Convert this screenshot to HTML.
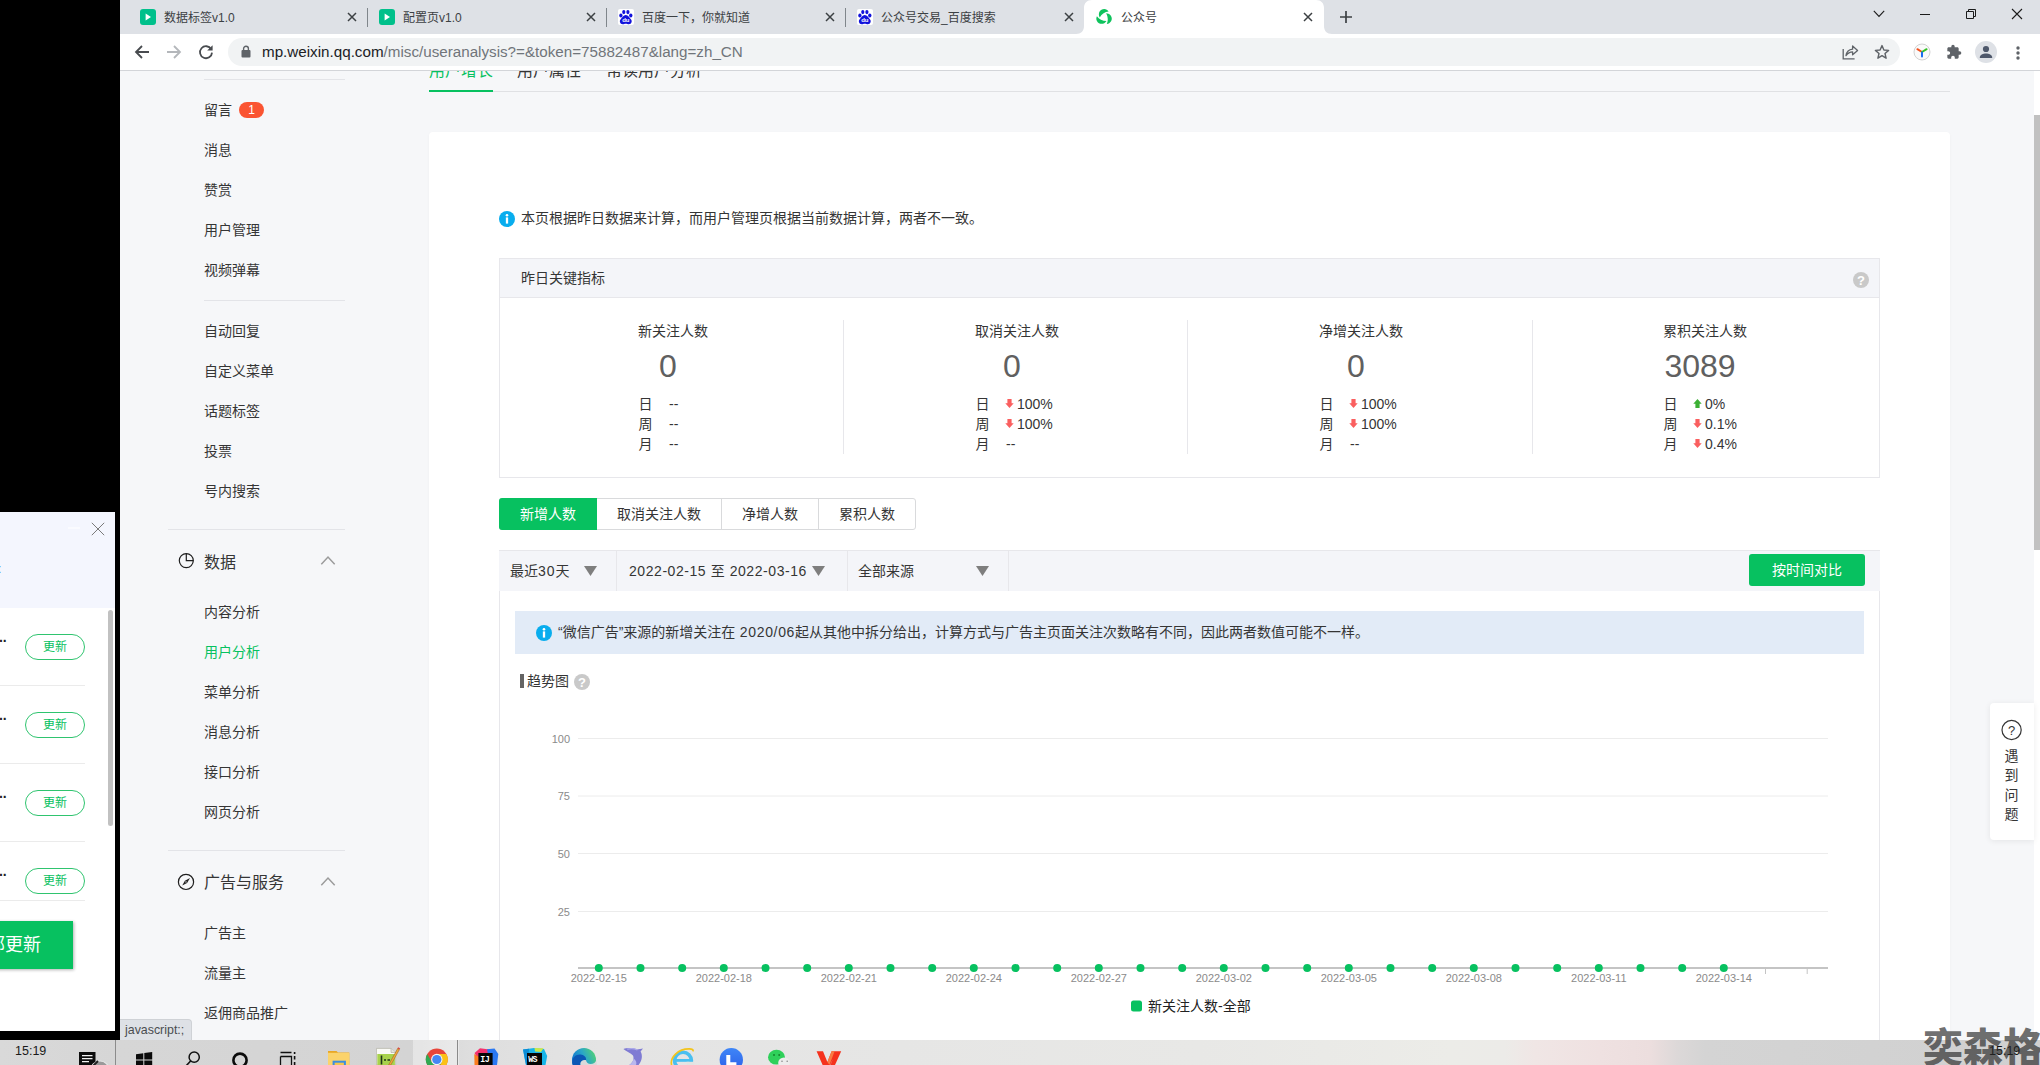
<!DOCTYPE html>
<html lang="zh-CN">
<head>
<meta charset="utf-8">
<title>公众号</title>
<style>
*{box-sizing:border-box;margin:0;padding:0}
html,body{width:2040px;height:1065px;overflow:hidden;background:#000}
body{position:relative;font-family:"Liberation Sans","Noto Sans CJK SC",sans-serif;font-size:14px;color:#353535;-webkit-font-smoothing:antialiased}
.abs{position:absolute}
.t{position:absolute;white-space:nowrap;line-height:20px}
/* ===== browser chrome ===== */
#tabbar{position:absolute;left:120px;top:0;width:1920px;height:34px;background:#dee1e6}
#toolbar{position:absolute;left:120px;top:34px;width:1920px;height:37px;background:#fff;border-bottom:1px solid #d3d5d9}
#pill{position:absolute;left:108px;top:4px;width:1672px;height:28px;border-radius:14px;background:#f1f3f4}
.tabt{position:absolute;top:9px;font-size:12px;line-height:18px;color:#3c4043;white-space:nowrap}
.tabsep{position:absolute;top:8px;width:1px;height:19px;background:#80868b}
/* ===== page ===== */
#page{position:absolute;left:120px;top:71px;width:1914px;height:969px;background:#f6f7f9;overflow:hidden}
#sb{position:absolute;left:2034px;top:71px;width:6px;height:969px;background:#fff}
#sbthumb{position:absolute;left:0;top:44px;width:6px;height:435px;background:#c1c1c1}
.nav{position:absolute;left:204px;font-size:14px;line-height:20px;color:#353535;white-space:nowrap}
.navh{position:absolute;left:204px;font-size:16px;line-height:22px;color:#353535;white-space:nowrap}
.hr{position:absolute;height:1px;background:#e3e4e8}
#card{position:absolute;left:429px;top:132px;width:1521px;height:940px;background:#fff;border-radius:4px 4px 0 0;box-shadow:0 1px 3px rgba(0,0,0,.04)}
/* ===== taskbar ===== */
#taskbar{position:absolute;left:0;top:1040px;width:2040px;height:25px;overflow:hidden;background:linear-gradient(90deg,#d9d9d9 0,#d6d6d6 115px,#d4d4d4 410px,#dedede 470px,#e4e4e4 600px,#e8e8e6 1200px,#ecece8 1450px,#ecebe8 1505px,#f0e6e5 1535px,#efe1e1 1600px,#ecdede 1650px,#dcd8d8 1678px,#d4d4d4 1705px,#d0d0d0 2040px)}
</style>
</head>
<body>
<!-- SECTION:chrome -->
<div id="tabbar">
  <!-- active tab shape -->
  <svg class="abs" style="left:956px;top:0" width="256" height="34" viewBox="0 0 256 34"><path d="M0 34 C5 34 8 31 8 26 V8 C8 3 11 0 16 0 H240 C245 0 248 3 248 8 V26 C248 31 251 34 256 34 Z" fill="#fff"/></svg>
  <!-- tab 1 -->
  <svg class="abs" style="left:20px;top:9px" width="16" height="16" viewBox="0 0 16 16"><rect width="16" height="16" rx="3" fill="#00c08b"/><path d="M5.6 4.6 L11 8 L5.6 11.4 Z" fill="#fff"/></svg>
  <div class="tabt" style="left:44px">数据标签v1.0</div>
  <svg class="abs tx" style="left:227px;top:12px" width="10" height="10" viewBox="0 0 10 10"><path d="M1 1 L9 9 M9 1 L1 9" stroke="#3c4043" stroke-width="1.5" fill="none"/></svg>
  <div class="tabsep" style="left:247px"></div>
  <!-- tab 2 -->
  <svg class="abs" style="left:259px;top:9px" width="16" height="16" viewBox="0 0 16 16"><rect width="16" height="16" rx="3" fill="#00c08b"/><path d="M5.6 4.6 L11 8 L5.6 11.4 Z" fill="#fff"/></svg>
  <div class="tabt" style="left:283px">配置页v1.0</div>
  <svg class="abs tx" style="left:466px;top:12px" width="10" height="10" viewBox="0 0 10 10"><path d="M1 1 L9 9 M9 1 L1 9" stroke="#3c4043" stroke-width="1.5" fill="none"/></svg>
  <div class="tabsep" style="left:486px"></div>
  <!-- tab 3 -->
  <svg class="abs" style="left:498px;top:9px" width="16" height="16" viewBox="0 0 16 16"><rect width="16" height="16" rx="2" fill="#fff"/><g fill="#1212dc"><ellipse cx="5.8" cy="3.1" rx="1.6" ry="2.1"/><ellipse cx="9.9" cy="3.1" rx="1.6" ry="2.1"/><ellipse cx="2.9" cy="6.6" rx="1.65" ry="2"/><ellipse cx="12.8" cy="6.6" rx="1.65" ry="2"/><path d="M7.8 6.1 C10.3 6.1 11.3 8.6 12.7 10.1 C14.6 12 13.7 15.3 10.9 15.3 C9.6 15.3 9 14.7 7.8 14.7 C6.6 14.7 6 15.3 4.7 15.3 C1.9 15.3 1 12 2.9 10.1 C4.3 8.6 5.3 6.1 7.8 6.1 Z"/></g><text x="7.8" y="13.4" font-size="6" font-weight="bold" fill="#fff" text-anchor="middle" font-family="Liberation Sans, sans-serif">du</text></svg>
  <div class="tabt" style="left:522px">百度一下，你就知道</div>
  <svg class="abs tx" style="left:705px;top:12px" width="10" height="10" viewBox="0 0 10 10"><path d="M1 1 L9 9 M9 1 L1 9" stroke="#3c4043" stroke-width="1.5" fill="none"/></svg>
  <div class="tabsep" style="left:725px"></div>
  <!-- tab 4 -->
  <svg class="abs" style="left:737px;top:9px" width="16" height="16" viewBox="0 0 16 16"><rect width="16" height="16" rx="2" fill="#fff"/><g fill="#1212dc"><ellipse cx="5.8" cy="3.1" rx="1.6" ry="2.1"/><ellipse cx="9.9" cy="3.1" rx="1.6" ry="2.1"/><ellipse cx="2.9" cy="6.6" rx="1.65" ry="2"/><ellipse cx="12.8" cy="6.6" rx="1.65" ry="2"/><path d="M7.8 6.1 C10.3 6.1 11.3 8.6 12.7 10.1 C14.6 12 13.7 15.3 10.9 15.3 C9.6 15.3 9 14.7 7.8 14.7 C6.6 14.7 6 15.3 4.7 15.3 C1.9 15.3 1 12 2.9 10.1 C4.3 8.6 5.3 6.1 7.8 6.1 Z"/></g><text x="7.8" y="13.4" font-size="6" font-weight="bold" fill="#fff" text-anchor="middle" font-family="Liberation Sans, sans-serif">du</text></svg>
  <div class="tabt" style="left:761px">公众号交易_百度搜索</div>
  <svg class="abs tx" style="left:944px;top:12px" width="10" height="10" viewBox="0 0 10 10"><path d="M1 1 L9 9 M9 1 L1 9" stroke="#3c4043" stroke-width="1.5" fill="none"/></svg>
  <!-- tab 5 active -->
  <svg class="abs" style="left:976px;top:9px" width="16" height="16" viewBox="0 0 16 16"><g fill="#0fc35d"><path id="cr" d="M3.7 8.4 C1.5 4.3 4.2 0.1 8.2 0.1 C10.1 0.1 11.6 1 12.6 2.5 C9 2.8 5.8 5 3.7 8.4 Z"/><path d="M3.7 8.4 C1.5 4.3 4.2 0.1 8.2 0.1 C10.1 0.1 11.6 1 12.6 2.5 C9 2.8 5.8 5 3.7 8.4 Z" transform="rotate(120 8.1 8.2)"/><path d="M3.7 8.4 C1.5 4.3 4.2 0.1 8.2 0.1 C10.1 0.1 11.6 1 12.6 2.5 C9 2.8 5.8 5 3.7 8.4 Z" transform="rotate(240 8.1 8.2)"/></g></svg>
  <div class="tabt" style="left:1001px">公众号</div>
  <svg class="abs tx" style="left:1183px;top:12px" width="10" height="10" viewBox="0 0 10 10"><path d="M1 1 L9 9 M9 1 L1 9" stroke="#3c4043" stroke-width="1.5" fill="none"/></svg>
  <!-- new tab plus -->
  <svg class="abs" style="left:1220px;top:11px" width="12" height="12" viewBox="0 0 12 12"><path d="M6 0 V12 M0 6 H12" stroke="#3c4043" stroke-width="1.7" fill="none"/></svg>
  <!-- window controls -->
  <svg class="abs" style="left:1753px;top:10px" width="12" height="8" viewBox="0 0 12 8"><path d="M0.8 0.8 L6 6.4 L11.2 0.8" stroke="#1b1b1b" stroke-width="1.1" fill="none"/></svg>
  <div class="abs" style="left:1800px;top:14px;width:10px;height:1px;background:#1b1b1b"></div>
  <svg class="abs" style="left:1845px;top:8px" width="12" height="12" viewBox="0 0 12 12"><path d="M1.5 3.5 H8.5 V10.5 H1.5 Z M3.5 3.5 V1.5 H10.5 V8.5 H8.5" stroke="#1b1b1b" stroke-width="1" fill="none"/></svg>
  <svg class="abs" style="left:1891px;top:8px" width="12" height="12" viewBox="0 0 12 12"><path d="M1 1 L11 11 M11 1 L1 11" stroke="#1b1b1b" stroke-width="1.1" fill="none"/></svg>
</div>
<div id="toolbar">
  <div id="pill"></div>
  <!-- back -->
  <svg class="abs" style="left:14px;top:10px" width="16" height="16" viewBox="0 0 16 16"><path d="M15 8 H2.5 M8 2 L2 8 L8 14" stroke="#484b4f" stroke-width="1.8" fill="none"/></svg>
  <!-- forward -->
  <svg class="abs" style="left:46px;top:10px" width="16" height="16" viewBox="0 0 16 16"><path d="M1 8 H13.5 M8 2 L14 8 L8 14" stroke="#b4b7bb" stroke-width="1.8" fill="none"/></svg>
  <!-- reload -->
  <svg class="abs" style="left:78px;top:10px" width="16" height="16" viewBox="0 0 16 16"><path d="M13.2 5.2 A6 6 0 1 0 14 8.6" stroke="#484b4f" stroke-width="1.8" fill="none"/><path d="M14.6 1.2 V6.6 H9.2 Z" fill="#484b4f"/></svg>
  <!-- lock -->
  <svg class="abs" style="left:121px;top:11px" width="10" height="13" viewBox="0 0 10 13"><rect x="0.5" y="5" width="9" height="7.5" rx="1" fill="#5f6368"/><path d="M2.6 5.5 V3.6 A2.4 2.4 0 0 1 7.4 3.6 V5.5" stroke="#5f6368" stroke-width="1.4" fill="none"/></svg>
  <div class="abs" id="url" style="left:142px;top:8px;font-size:15.2px;line-height:20px;white-space:nowrap;color:#70757a"><span style="color:#202124">mp.weixin.qq.com</span>/misc/useranalysis?=&amp;token=75882487&amp;lang=zh_CN</div>
  <!-- share -->
  <svg class="abs" style="left:1722px;top:10px" width="17" height="16" viewBox="0 0 17 16"><path d="M1.2 5 V14.8 H12.6" stroke="#5f6368" stroke-width="1.3" fill="none"/><path d="M4 11.6 C4.6 7.8 7 5.6 10.6 5.2 V2 L15.6 6.4 L10.6 10.8 V7.8 C8 7.8 5.8 9 4 11.6 Z" stroke="#5f6368" stroke-width="1.3" fill="none" stroke-linejoin="round"/></svg>
  <!-- star -->
  <svg class="abs" style="left:1754px;top:10px" width="16" height="16" viewBox="0 0 16 16"><path d="M8 1.6 L9.9 6 L14.6 6.4 L11 9.5 L12.1 14.2 L8 11.7 L3.9 14.2 L5 9.5 L1.4 6.4 L6.1 6 Z" stroke="#5f6368" stroke-width="1.4" fill="none" stroke-linejoin="round"/></svg>
  <!-- Y ext -->
  <svg class="abs" style="left:1793px;top:9px" width="18" height="18" viewBox="0 0 18 18"><circle cx="9" cy="9" r="8" fill="#fafafa" stroke="#c8c8c8" stroke-width="0.8"/><path d="M9 9 L4.4 6.2" stroke="#f4511e" stroke-width="2" stroke-linecap="round"/><path d="M9 9 L13.6 6.2" stroke="#34c224" stroke-width="2" stroke-linecap="round"/><path d="M9 9.4 V13.6" stroke="#1a6cf0" stroke-width="2" stroke-linecap="round"/></svg>
  <!-- puzzle -->
  <svg class="abs" style="left:1826px;top:10px" width="16" height="16" viewBox="0 0 24 24"><path d="M20.5 11H19V7c0-1.1-.9-2-2-2h-4V3.5a2.5 2.5 0 0 0-5 0V5H4c-1.1 0-1.99.9-1.99 2v3.8H3.5c1.49 0 2.7 1.21 2.7 2.7s-1.21 2.7-2.7 2.7H2V20c0 1.1.9 2 2 2h3.8v-1.5c0-1.49 1.21-2.7 2.7-2.7 1.49 0 2.7 1.21 2.7 2.7V22H17c1.1 0 2-.9 2-2v-4h1.5a2.5 2.5 0 0 0 0-5z" fill="#5f6368"/></svg>
  <!-- avatar -->
  <svg class="abs" style="left:1855px;top:7px" width="22" height="22" viewBox="0 0 22 22"><circle cx="11" cy="11" r="11" fill="#dee1e6"/><circle cx="11" cy="8" r="3.1" fill="#4e586b"/><path d="M4.8 16.6 C4.8 13.4 8.2 12.4 11 12.4 C13.8 12.4 17.2 13.4 17.2 16.6 V17 H4.8 Z" fill="#4e586b"/></svg>
  <!-- menu -->
  <svg class="abs" style="left:1896px;top:11.5px" width="4" height="14" viewBox="0 0 4 14"><circle cx="2" cy="2" r="1.7" fill="#5f6368"/><circle cx="2" cy="7" r="1.7" fill="#5f6368"/><circle cx="2" cy="12" r="1.7" fill="#5f6368"/></svg>
</div>
<!-- SECTION:page -->
<div id="page"></div>
<div id="sb"><div id="sbthumb"></div></div>
<!-- SECTION:sidebar -->
<div class="hr" style="left:204px;top:79px;width:141px"></div>
<div class="nav" style="top:100px">留言</div>
<div class="nav" style="top:140px">消息</div>
<div class="nav" style="top:180px">赞赏</div>
<div class="nav" style="top:220px">用户管理</div>
<div class="nav" style="top:260px">视频弹幕</div>
<div class="nav" style="top:321px">自动回复</div>
<div class="nav" style="top:361px">自定义菜单</div>
<div class="nav" style="top:401px">话题标签</div>
<div class="nav" style="top:441px">投票</div>
<div class="nav" style="top:481px">号内搜索</div>
<div class="nav" style="top:602px">内容分析</div>
<div class="nav" style="top:642px;color:#07c160">用户分析</div>
<div class="nav" style="top:682px">菜单分析</div>
<div class="nav" style="top:722px">消息分析</div>
<div class="nav" style="top:762px">接口分析</div>
<div class="nav" style="top:802px">网页分析</div>
<div class="nav" style="top:923px">广告主</div>
<div class="nav" style="top:963px">流量主</div>
<div class="nav" style="top:1003px">返佣商品推广</div>
<div class="abs" style="left:239px;top:102px;width:25px;height:16px;border-radius:8px;background:#fa5432;color:#fff;font-size:12px;line-height:16px;text-align:center">1</div>
<div class="hr" style="left:204px;top:300px;width:141px"></div>
<div class="hr" style="left:168px;top:529px;width:177px"></div>
<div class="hr" style="left:168px;top:850px;width:177px"></div>
<svg class="abs" style="left:178px;top:552px" width="17" height="17" viewBox="0 0 17 17"><circle cx="8.3" cy="8.6" r="7" fill="none" stroke="#1f1f1f" stroke-width="1.2"/><path d="M8.3 1.6 V8.6 H15.3" fill="none" stroke="#1f1f1f" stroke-width="1.2"/></svg>
<div class="navh" style="top:551.6px">数据</div>
<svg class="abs" style="left:320px;top:555px" width="16" height="11" viewBox="0 0 16 11"><path d="M1.3 9.2 L8 2 L14.7 9.2" fill="none" stroke="#9b9b9b" stroke-width="1.5"/></svg>
<svg class="abs" style="left:177px;top:873px" width="18" height="18" viewBox="0 0 18 18"><circle cx="9" cy="8.9" r="7.6" fill="none" stroke="#1f1f1f" stroke-width="1.2"/><path d="M13 5 L10.1 10 L5.2 12.6 L7.9 7.7 Z" fill="#1f1f1f"/><circle cx="9" cy="8.9" r="0.7" fill="#f6f7f9"/></svg>
<div class="navh" style="top:872px">广告与服务</div>
<svg class="abs" style="left:320px;top:876px" width="16" height="11" viewBox="0 0 16 11"><path d="M1.3 9.2 L8 2 L14.7 9.2" fill="none" stroke="#9b9b9b" stroke-width="1.5"/></svg>
<div class="abs" style="left:120px;top:1019px;width:72px;height:21px;background:#dee1e6;border-top-right-radius:4px;border:1px solid #cfd2d6;border-left:none;border-bottom:none;font-size:12.4px;line-height:20px;color:#4a4d51;padding-left:5px">javascript:;</div>
<!-- SECTION:main -->
<div class="abs" style="left:120px;top:71px;width:1914px;height:60px;overflow:hidden">
 <div class="t" style="left:309px;top:-11px;font-size:16px;line-height:22px;color:#07c160">用户增长</div>
 <div class="t" style="left:397px;top:-11px;font-size:16px;line-height:22px;color:#353535">用户属性</div>
 <div class="t" style="left:486px;top:-11px;font-size:16px;line-height:22px;color:#353535">常读用户分析</div>
 <div class="abs" style="left:309px;top:20px;width:1521px;height:1px;background:#e0e1e4"></div>
 <div class="abs" style="left:309px;top:19px;width:64px;height:2px;background:#07c160"></div>
</div>
<div id="card"></div>
<svg class="abs" style="left:499px;top:211px" width="16" height="16" viewBox="0 0 16 16"><circle cx="8" cy="8" r="8" fill="#08adee"/><circle cx="8" cy="4.3" r="1.3" fill="#fff"/><rect x="6.85" y="6.4" width="2.3" height="6.2" fill="#fff"/></svg>
<div class="t" style="left:521px;top:208px">本页根据昨日数据来计算，而用户管理页根据当前数据计算，两者不一致。</div>
<div class="abs" style="left:499px;top:258px;width:1381px;height:220px;border:1px solid #e7e7eb;background:#fff"></div>
<div class="abs" style="left:500px;top:259px;width:1379px;height:39px;background:#f4f5f9;border-bottom:1px solid #e7e7eb"></div>
<div class="t" style="left:521px;top:268px">昨日关键指标</div>
<svg class="abs" style="left:1853px;top:272px" width="16" height="16" viewBox="0 0 16 16"><circle cx="8" cy="8" r="8" fill="#c9c9c9"/><text x="8" y="12.6" font-size="13" font-weight="bold" fill="#fff" text-anchor="middle" font-family="Liberation Sans, sans-serif">?</text></svg>
<div class="abs" style="left:843px;top:320px;width:1px;height:134px;background:#e7e7eb"></div>
<div class="abs" style="left:1187px;top:320px;width:1px;height:134px;background:#e7e7eb"></div>
<div class="abs" style="left:1532px;top:320px;width:1px;height:134px;background:#e7e7eb"></div>
<div class="t" style="left:638px;top:321px">新关注人数</div>
<div class="t num" style="left:608px;top:346px;width:120px;text-align:center;font-size:32px;line-height:40px;color:#606060">0</div>
<div class="t" style="left:638.4px;top:394px">日</div>
<div class="t" style="left:669px;top:394px">--</div>
<div class="t" style="left:638.4px;top:414px">周</div>
<div class="t" style="left:669px;top:414px">--</div>
<div class="t" style="left:638.4px;top:434px">月</div>
<div class="t" style="left:669px;top:434px">--</div>
<div class="t" style="left:975px;top:321px">取消关注人数</div>
<div class="t num" style="left:952px;top:346px;width:120px;text-align:center;font-size:32px;line-height:40px;color:#606060">0</div>
<div class="t" style="left:975.4px;top:394px">日</div>
<svg class="abs" style="left:1004.5px;top:399px" width="9" height="9" viewBox="0 0 9 9"><path d="M4.5 9 L8.7 4.2 H6.6 V0 H2.4 V4.2 H0.3 Z" fill="#fa5f5f"/></svg>
<div class="t" style="left:1017px;top:394px">100%</div>
<div class="t" style="left:975.4px;top:414px">周</div>
<svg class="abs" style="left:1004.5px;top:419px" width="9" height="9" viewBox="0 0 9 9"><path d="M4.5 9 L8.7 4.2 H6.6 V0 H2.4 V4.2 H0.3 Z" fill="#fa5f5f"/></svg>
<div class="t" style="left:1017px;top:414px">100%</div>
<div class="t" style="left:975.4px;top:434px">月</div>
<div class="t" style="left:1006px;top:434px">--</div>
<div class="t" style="left:1319px;top:321px">净增关注人数</div>
<div class="t num" style="left:1296px;top:346px;width:120px;text-align:center;font-size:32px;line-height:40px;color:#606060">0</div>
<div class="t" style="left:1319.4px;top:394px">日</div>
<svg class="abs" style="left:1348.5px;top:399px" width="9" height="9" viewBox="0 0 9 9"><path d="M4.5 9 L8.7 4.2 H6.6 V0 H2.4 V4.2 H0.3 Z" fill="#fa5f5f"/></svg>
<div class="t" style="left:1361px;top:394px">100%</div>
<div class="t" style="left:1319.4px;top:414px">周</div>
<svg class="abs" style="left:1348.5px;top:419px" width="9" height="9" viewBox="0 0 9 9"><path d="M4.5 9 L8.7 4.2 H6.6 V0 H2.4 V4.2 H0.3 Z" fill="#fa5f5f"/></svg>
<div class="t" style="left:1361px;top:414px">100%</div>
<div class="t" style="left:1319.4px;top:434px">月</div>
<div class="t" style="left:1350px;top:434px">--</div>
<div class="t" style="left:1663px;top:321px">累积关注人数</div>
<div class="t num" style="left:1640px;top:346px;width:120px;text-align:center;font-size:32px;line-height:40px;color:#606060">3089</div>
<div class="t" style="left:1663.4px;top:394px">日</div>
<svg class="abs" style="left:1692.5px;top:399px" width="9" height="9" viewBox="0 0 9 9"><path d="M4.5 0 L8.7 4.8 H6.6 V9 H2.4 V4.8 H0.3 Z" fill="#3cb034"/></svg>
<div class="t" style="left:1705px;top:394px">0%</div>
<div class="t" style="left:1663.4px;top:414px">周</div>
<svg class="abs" style="left:1692.5px;top:419px" width="9" height="9" viewBox="0 0 9 9"><path d="M4.5 9 L8.7 4.2 H6.6 V0 H2.4 V4.2 H0.3 Z" fill="#fa5f5f"/></svg>
<div class="t" style="left:1705px;top:414px">0.1%</div>
<div class="t" style="left:1663.4px;top:434px">月</div>
<svg class="abs" style="left:1692.5px;top:439px" width="9" height="9" viewBox="0 0 9 9"><path d="M4.5 9 L8.7 4.2 H6.6 V0 H2.4 V4.2 H0.3 Z" fill="#fa5f5f"/></svg>
<div class="t" style="left:1705px;top:434px">0.4%</div>
<div class="abs" style="left:499px;top:498px;width:417px;height:32px;border:1px solid #d9dadc;border-radius:3px;background:#fff"></div>
<div class="abs" style="left:499px;top:498px;width:98px;height:32px;background:#07c160;border-radius:3px 0 0 3px"></div>
<div class="abs" style="left:721px;top:499px;width:1px;height:30px;background:#d9dadc"></div>
<div class="abs" style="left:818px;top:499px;width:1px;height:30px;background:#d9dadc"></div>
<div class="t" style="left:478px;top:504px;width:140px;text-align:center;color:#fff">新增人数</div>
<div class="t" style="left:589px;top:504px;width:140px;text-align:center;color:#353535">取消关注人数</div>
<div class="t" style="left:700px;top:504px;width:140px;text-align:center;color:#353535">净增人数</div>
<div class="t" style="left:797px;top:504px;width:140px;text-align:center;color:#353535">累积人数</div>
<div class="abs" style="left:499px;top:550px;width:1381px;height:600px;border:1px solid #e7e7eb;border-top:none"></div>
<div class="abs" style="left:499px;top:550px;width:1381px;height:41px;background:#f4f5f9;border-top:1px solid #e7e7eb"></div>
<div class="abs" style="left:616px;top:551px;width:1px;height:40px;background:#e7e7eb"></div>
<div class="abs" style="left:847px;top:551px;width:1px;height:40px;background:#e7e7eb"></div>
<div class="abs" style="left:1008px;top:551px;width:1px;height:40px;background:#e7e7eb"></div>
<div class="t" style="left:510px;top:561px">最近<span style="letter-spacing:1px">30</span>天</div>
<svg class="abs" style="left:584px;top:566px" width="13" height="10" viewBox="0 0 13 10"><path d="M0 0 H13 L6.5 10 Z" fill="#7e7e7e"/></svg>
<div class="t" id="daterange" style="left:629px;top:561px;letter-spacing:0.56px">2022-02-15 至 2022-03-16</div>
<svg class="abs" style="left:812px;top:566px" width="13" height="10" viewBox="0 0 13 10"><path d="M0 0 H13 L6.5 10 Z" fill="#7e7e7e"/></svg>
<div class="t" style="left:858px;top:561px">全部来源</div>
<svg class="abs" style="left:976px;top:566px" width="13" height="10" viewBox="0 0 13 10"><path d="M0 0 H13 L6.5 10 Z" fill="#7e7e7e"/></svg>
<div class="abs" style="left:1749px;top:554px;width:116px;height:32px;background:#07c160;border-radius:3px;color:#fff;font-size:14px;line-height:32px;text-align:center">按时间对比</div>
<div class="abs" style="left:515px;top:611px;width:1349px;height:43px;background:#e2ebf7"></div>
<svg class="abs" style="left:536px;top:625px" width="16" height="16" viewBox="0 0 16 16"><circle cx="8" cy="8" r="8" fill="#08adee"/><circle cx="8" cy="4.3" r="1.3" fill="#fff"/><rect x="6.85" y="6.4" width="2.3" height="6.2" fill="#fff"/></svg>
<div class="t" id="notice" style="left:558px;top:622px">“微信广告”来源的新增关注在<span style="letter-spacing:.65px"> 2020/06</span>起从其他中拆分给出，计算方式与广告主页面关注次数略有不同，因此两者数值可能不一样。</div>
<div class="abs" style="left:520px;top:674px;width:4px;height:14px;background:#646464"></div>
<div class="t" style="left:527px;top:671px">趋势图</div>
<svg class="abs" style="left:574px;top:674px" width="16" height="16" viewBox="0 0 16 16"><circle cx="8" cy="8" r="8" fill="#c9c9c9"/><text x="8" y="12.6" font-size="13" font-weight="bold" fill="#fff" text-anchor="middle" font-family="Liberation Sans, sans-serif">?</text></svg>
<svg class="abs" style="left:520px;top:720px" width="1340" height="300" viewBox="520 720 1340 300" font-family="Liberation Sans, Noto Sans CJK SC, sans-serif">
<path d="M578 738.5 H1828" stroke="#ececec" stroke-width="1"/>
<text x="570" y="742.9" font-size="11" fill="#8a8a8a" text-anchor="end">100</text>
<path d="M578 796 H1828" stroke="#ececec" stroke-width="1"/>
<text x="570" y="800.4" font-size="11" fill="#8a8a8a" text-anchor="end">75</text>
<path d="M578 853.5 H1828" stroke="#ececec" stroke-width="1"/>
<text x="570" y="857.9" font-size="11" fill="#8a8a8a" text-anchor="end">50</text>
<path d="M578 911.5 H1828" stroke="#ececec" stroke-width="1"/>
<text x="570" y="916" font-size="11" fill="#8a8a8a" text-anchor="end">25</text>
<path d="M578 968 H1828" stroke="#c4c4c4" stroke-width="2"/>
<circle cx="598.8" cy="968" r="4" fill="#07c160"/>
<circle cx="640.5" cy="968" r="4" fill="#07c160"/>
<circle cx="682.2" cy="968" r="4" fill="#07c160"/>
<circle cx="723.8" cy="968" r="4" fill="#07c160"/>
<circle cx="765.5" cy="968" r="4" fill="#07c160"/>
<circle cx="807.2" cy="968" r="4" fill="#07c160"/>
<circle cx="848.8" cy="968" r="4" fill="#07c160"/>
<circle cx="890.5" cy="968" r="4" fill="#07c160"/>
<circle cx="932.2" cy="968" r="4" fill="#07c160"/>
<circle cx="973.8" cy="968" r="4" fill="#07c160"/>
<circle cx="1015.5" cy="968" r="4" fill="#07c160"/>
<circle cx="1057.2" cy="968" r="4" fill="#07c160"/>
<circle cx="1098.8" cy="968" r="4" fill="#07c160"/>
<circle cx="1140.5" cy="968" r="4" fill="#07c160"/>
<circle cx="1182.2" cy="968" r="4" fill="#07c160"/>
<circle cx="1223.8" cy="968" r="4" fill="#07c160"/>
<circle cx="1265.5" cy="968" r="4" fill="#07c160"/>
<circle cx="1307.2" cy="968" r="4" fill="#07c160"/>
<circle cx="1348.8" cy="968" r="4" fill="#07c160"/>
<circle cx="1390.5" cy="968" r="4" fill="#07c160"/>
<circle cx="1432.2" cy="968" r="4" fill="#07c160"/>
<circle cx="1473.8" cy="968" r="4" fill="#07c160"/>
<circle cx="1515.5" cy="968" r="4" fill="#07c160"/>
<circle cx="1557.2" cy="968" r="4" fill="#07c160"/>
<circle cx="1598.8" cy="968" r="4" fill="#07c160"/>
<circle cx="1640.5" cy="968" r="4" fill="#07c160"/>
<circle cx="1682.2" cy="968" r="4" fill="#07c160"/>
<circle cx="1723.8" cy="968" r="4" fill="#07c160"/>
<path d="M1765.5 969 V974" stroke="#c4c4c4" stroke-width="1"/>
<path d="M1807.2 969 V974" stroke="#c4c4c4" stroke-width="1"/>
<text x="598.8" y="982" font-size="11" fill="#8a8a8a" text-anchor="middle">2022-02-15</text>
<text x="723.8" y="982" font-size="11" fill="#8a8a8a" text-anchor="middle">2022-02-18</text>
<text x="848.8" y="982" font-size="11" fill="#8a8a8a" text-anchor="middle">2022-02-21</text>
<text x="973.8" y="982" font-size="11" fill="#8a8a8a" text-anchor="middle">2022-02-24</text>
<text x="1098.8" y="982" font-size="11" fill="#8a8a8a" text-anchor="middle">2022-02-27</text>
<text x="1223.8" y="982" font-size="11" fill="#8a8a8a" text-anchor="middle">2022-03-02</text>
<text x="1348.8" y="982" font-size="11" fill="#8a8a8a" text-anchor="middle">2022-03-05</text>
<text x="1473.8" y="982" font-size="11" fill="#8a8a8a" text-anchor="middle">2022-03-08</text>
<text x="1598.8" y="982" font-size="11" fill="#8a8a8a" text-anchor="middle">2022-03-11</text>
<text x="1723.8" y="982" font-size="11" fill="#8a8a8a" text-anchor="middle">2022-03-14</text>
<rect x="1131" y="1000.5" width="11" height="11" rx="2.5" fill="#07c160"/>
</svg>
<div class="t" style="left:1148px;top:996px;color:#222">新关注人数-全部</div>
<div class="abs" style="left:1990px;top:703px;width:44px;height:137px;background:#fff;border-radius:4px 0 0 4px;box-shadow:0 1px 6px rgba(0,0,0,.08)"></div>
<svg class="abs" style="left:2001px;top:719px" width="22" height="22" viewBox="0 0 22 22"><circle cx="10.6" cy="11" r="9.6" fill="none" stroke="#353535" stroke-width="1.2"/><text x="10.6" y="15.6" font-size="13" fill="#353535" text-anchor="middle" font-family="Liberation Sans, sans-serif">?</text></svg>
<div class="t" style="left:2004.5px;top:746.0px;color:#353535">遇</div>
<div class="t" style="left:2004.5px;top:765.4px;color:#353535">到</div>
<div class="t" style="left:2004.5px;top:784.7px;color:#353535">问</div>
<div class="t" style="left:2004.5px;top:803.8px;color:#353535">题</div>
<!-- SECTION:popup -->
<div class="abs" id="popup" style="left:0;top:512px;width:115px;height:519px;background:#fff;overflow:hidden">
 <div class="abs" style="left:0;top:0;width:115px;height:96px;background:#f4f6fe"></div>
 <svg class="abs" style="left:91px;top:10px" width="14" height="14" viewBox="0 0 14 14"><path d="M0.8 0.8 L13.2 13.2 M13.2 0.8 L0.8 13.2" stroke="#7a7a7a" stroke-width="1" fill="none"/></svg>
 <div class="abs" style="left:68px;top:15px;width:12px;height:2px;background:#fafbff"></div>
 <div class="abs" style="left:-2px;top:47px;font-size:12px;line-height:20px;color:#3b6cf5">:</div>
 <div class="abs" style="left:107.5px;top:98px;width:5.5px;height:216px;background:#c1c1c1;border-radius:3px"></div>
 <div class="abs" style="left:-5px;top:115px;font-size:14px;line-height:20px;color:#222;letter-spacing:0px;font-weight:bold">...</div>
 <div class="abs" style="left:25px;top:122px;width:60px;height:26px;border:1px solid #2fc46f;border-radius:13px;color:#07c160;font-size:12px;line-height:24px;text-align:center">更新</div>
 <div class="abs" style="left:0;top:173px;width:85px;height:1px;background:#ebebeb"></div>
 <div class="abs" style="left:-5px;top:193px;font-size:14px;line-height:20px;color:#222;letter-spacing:0px;font-weight:bold">...</div>
 <div class="abs" style="left:25px;top:200px;width:60px;height:26px;border:1px solid #2fc46f;border-radius:13px;color:#07c160;font-size:12px;line-height:24px;text-align:center">更新</div>
 <div class="abs" style="left:0;top:251px;width:85px;height:1px;background:#ebebeb"></div>
 <div class="abs" style="left:-5px;top:271px;font-size:14px;line-height:20px;color:#222;letter-spacing:0px;font-weight:bold">...</div>
 <div class="abs" style="left:25px;top:278px;width:60px;height:26px;border:1px solid #2fc46f;border-radius:13px;color:#07c160;font-size:12px;line-height:24px;text-align:center">更新</div>
 <div class="abs" style="left:0;top:329px;width:85px;height:1px;background:#ebebeb"></div>
 <div class="abs" style="left:-5px;top:349px;font-size:14px;line-height:20px;color:#222;letter-spacing:0px;font-weight:bold">...</div>
 <div class="abs" style="left:25px;top:356px;width:60px;height:26px;border:1px solid #2fc46f;border-radius:13px;color:#07c160;font-size:12px;line-height:24px;text-align:center">更新</div>
 <div class="abs" style="left:0;top:388px;width:85px;height:1px;background:#ebebeb"></div>
 <div class="abs" style="left:-40px;top:409px;width:113px;height:48px;background:#07c160;box-shadow:1px 1px 3px rgba(0,0,0,.3);color:#fff;font-size:18px;line-height:48px;text-align:right;padding-right:32px;white-space:nowrap">全部更新</div>
</div>
<!-- SECTION:taskbar -->
<div id="taskbar">
 <div class="abs" style="left:413px;top:0;width:44px;height:25px;background:rgba(255,255,255,.38)"></div>
 <div class="abs" style="left:115px;top:0;width:1px;height:25px;background:#8c8c8c"></div>
 <div class="abs" style="left:457px;top:0;width:1px;height:25px;background:#8a8a8a"></div><div class="abs" style="left:458px;top:0;width:1px;height:25px;background:#e9e9e9"></div>
 <div class="t" style="left:15px;top:1px;font-size:12.5px;line-height:20px;color:#1a1a1a">15:19</div>
 <div class="t" style="left:1989px;top:1px;font-size:12.5px;line-height:20px;color:#111">15:19</div>
 <svg class="abs" style="left:0;top:0" width="900" height="25" viewBox="0 0 900 25">
  <defs><linearGradient id="eg" x1="0" y1="0.6" x2="1" y2="0.1"><stop offset="0" stop-color="#0c6fd0"/><stop offset="0.5" stop-color="#2aa6c8"/><stop offset="1" stop-color="#56d86a"/></linearGradient><linearGradient id="lg" x1="0" y1="0" x2="0" y2="1"><stop offset="0" stop-color="#3f86f7"/><stop offset="1" stop-color="#2b5fe9"/></linearGradient></defs>
  <rect x="79" y="12" width="16.5" height="14" fill="#0d0d0d"/><path d="M82 15.6 H92.5 M82 18.6 H92.5 M82 21.6 H89" stroke="#f2f2f2" stroke-width="1.2"/><circle cx="100" cy="30" r="9" fill="#9a9a9a" stroke="#e6e6e6" stroke-width="1.2"/><path d="M92.5 26.5 L98 21" stroke="#222" stroke-width="2"/>
  <path d="M136 14.2 L143.3 13.2 V19.6 H136 Z M144.3 13.05 L152.2 12 V19.6 H144.3 Z M136 20.6 H143.3 V25 H136 Z M144.3 20.6 H152.2 V25 H144.3 Z" fill="#0a0a0a"/>
  <circle cx="194.2" cy="17.2" r="5.1" fill="none" stroke="#111" stroke-width="1.5"/><path d="M190.6 21 L185.5 26.5" stroke="#111" stroke-width="1.6"/>
  <circle cx="240" cy="20.2" r="6.6" fill="none" stroke="#0c0c0c" stroke-width="2.6"/>
  <path d="M280.5 12.5 H291.5 M280.5 16.5 H291.5 V25 M280.5 16.5 V25" stroke="#111" stroke-width="1.3" fill="none"/><path d="M294.6 12 V14 M294.6 16 V19.5 M294.6 22 V25" stroke="#111" stroke-width="1.6"/>
  <path d="M328 11 H336.5 L338 12.6 H349.3 V25 H328 Z" fill="#e9a825"/><rect x="328" y="12.8" width="21.3" height="12.2" fill="#fbd36b"/><rect x="332.6" y="20.7" width="13.3" height="5" fill="#3a8ee0"/><rect x="334.6" y="22.7" width="9.3" height="3" fill="#f3c64f"/>
  <path d="M376.5 8.4 H391 L395.6 12.5 V25 H376.5 Z" fill="#fafaf6" stroke="#b5b5a8" stroke-width="0.7"/><path d="M391 8.4 V12.5 H395.6" fill="#e4e4dc" stroke="#a9a99d" stroke-width="0.6"/><rect x="377.3" y="14" width="17.6" height="11" fill="#a8d24c"/><path d="M381.5 15.5 V24.5" stroke="#20351a" stroke-width="1.6"/><path d="M384 20 H386 M387.5 20 H390" stroke="#20351a" stroke-width="1.5"/><path d="M397.6 8.6 L399.4 9.6 L390.8 25 H388.6 Z" fill="#f0a93a" stroke="#8d5a1c" stroke-width="0.5"/><path d="M397.4 8.4 L399.6 9.6 L400.2 8.4 L398.2 7.2 Z" fill="#d8453c"/>
  <g transform="translate(436.8 19.5)"><circle r="11" fill="#e8453a"/><path d="M0 -5.6 L9.47 -5.6 A11 11 0 0 1 0.115 11 L4.85 2.8 L0 0 Z" fill="#fbc116"/><path d="M4.85 2.8 L0.115 11 A11 11 0 0 1 -9.585 -5.4 L-4.85 2.8 L0 0 Z" fill="#31a952"/><circle r="5.7" fill="#f4f4f4"/><circle r="4.6" fill="#4487f4"/></g>
  <path d="M474.5 13 L480 8.2 L489.5 9.5 L491 17 L478 19 Z" fill="#f4326e"/><path d="M487 9.2 L494.5 8.6 L498.3 14 L497 25 H490 Z" fill="#2a78f2"/><path d="M474.3 14 L479 17 L479 25 H474.5 Z" fill="#fb7c1f"/><rect x="478.4" y="13" width="14.2" height="12.5" fill="#050505"/><text x="480.2" y="22" font-size="8.4" font-weight="bold" fill="#fff" font-family="Liberation Mono, monospace" letter-spacing="-0.4">IJ</text>
  <path d="M523 9.5 L534 8 L544 9 L547.2 16 L545.5 25 H526 Z" fill="#17b5e8"/><path d="M534.5 8 L543.5 8.2 L541 12 L535 11.5 Z" fill="#c9e84d"/><path d="M523 9.5 L529 8.7 L528 25 H526 Z" fill="#0d8cd6"/><rect x="527" y="13" width="15" height="12.5" fill="#050505"/><text x="528.3" y="22" font-size="8.4" font-weight="bold" fill="#fff" font-family="Liberation Mono, monospace" letter-spacing="-0.8">WS</text>
  <circle cx="584" cy="20" r="12" fill="url(#eg)"/><path d="M572.2 22 C572.5 17 576.5 14.2 580.5 14.6 C584.5 15 586.6 17.6 586 20.2 C583.2 19.6 580.6 21 580.4 23.6 C580.3 24.6 580.6 25.4 581 26 H573 C572.4 24.8 572.1 23.4 572.2 22 Z" fill="#0b57b5"/><path d="M586 20.2 C586.4 22.6 588.2 24 590.6 24 C593.4 24 595.6 22.4 596.4 20.2 L597 26 H581 C580.6 25.4 580.3 24.6 580.4 23.6 C580.6 21 583.2 19.6 586 20.2 Z" fill="#dadada"/>
  <path d="M623.4 9 C627 7.6 633 7.8 637 9.4 L643 8.4 L640.6 11.6 C642.8 15.4 642.2 20.8 638.6 25 H629.4 C633 22.6 634.4 18.8 633 15.6 C630.6 13 626.4 11.6 623.4 9 Z" fill="#7f7bd3"/><path d="M629 25 C631.6 23.4 633.4 21 633.6 18.4 C636.2 20 637 23 636 25 Z" fill="#bab8ee"/><path d="M627.2 9.2 C630.4 8.4 634.4 8.6 637.4 10" stroke="#aeacea" stroke-width="1.2" fill="none"/>
  <circle cx="683" cy="20.6" r="8.4" fill="none" stroke="#49bff0" stroke-width="3.6"/><rect x="675.5" y="19" width="16" height="2.8" fill="#49bff0"/><rect x="686.5" y="21.8" width="8" height="4" fill="#e3e3e1"/><path d="M671.6 25 C669.8 17.6 678 8.6 689.4 8.8 C692.2 8.9 693.4 9.8 693 11.4" stroke="#f3c41c" stroke-width="1.7" fill="none"/>
  <circle cx="731.3" cy="19.7" r="11.7" fill="url(#lg)"/><path d="M728.3 15 V24.2 L736.4 24.2" stroke="#fff" stroke-width="4" fill="none"/>
  <ellipse cx="776.5" cy="17.2" rx="8.5" ry="7.4" fill="#2fd05a"/><circle cx="774" cy="14.9" r="1" fill="#14862c"/><circle cx="779.2" cy="14.9" r="1" fill="#14862c"/><ellipse cx="784" cy="22.8" rx="5.8" ry="5.2" fill="#ececec"/><circle cx="782" cy="21.2" r="0.8" fill="#8a8a8a"/><circle cx="787.2" cy="21.2" r="0.8" fill="#8a8a8a"/>
  <path d="M816.6 11.2 H823 L827.4 22 L831.6 11.2 H841.2 L835 25 H830.5 L832.8 19 L830.2 25 H822.6 Z" fill="#f5321d"/><path d="M831.6 11.2 H834.6 L829.4 25 L827.4 22 Z" fill="#f97b43"/>
 </svg>
</div>
<div class="t" id="wm" style="left:1923px;top:1018px;font-size:40px;line-height:60px;font-weight:900;letter-spacing:0px;color:rgba(40,40,40,.68);font-family:'Liberation Sans','Noto Sans CJK SC',sans-serif">奕森格</div>
</body>
</html>
